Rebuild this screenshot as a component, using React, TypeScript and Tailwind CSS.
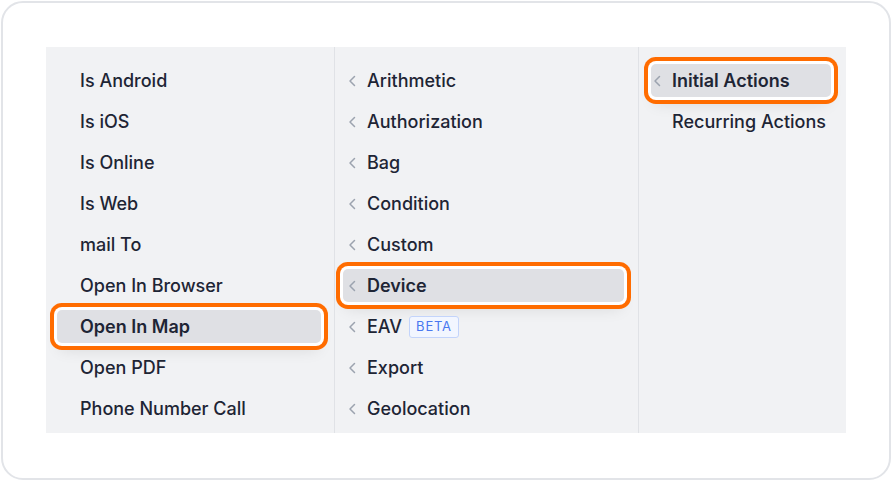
import React from "react";

type Item = {
  label: string;
  selected?: boolean;
  chevron?: boolean;
  badge?: string;
};

const left: Item[] = [
  { label: "Is Android" },
  { label: "Is iOS" },
  { label: "Is Online" },
  { label: "Is Web" },
  { label: "mail To" },
  { label: "Open In Browser" },
  { label: "Open In Map", selected: true },
  { label: "Open PDF" },
  { label: "Phone Number Call" },
];

const middle: Item[] = [
  { label: "Arithmetic", chevron: true },
  { label: "Authorization", chevron: true },
  { label: "Bag", chevron: true },
  { label: "Condition", chevron: true },
  { label: "Custom", chevron: true },
  { label: "Device", chevron: true, selected: true },
  { label: "EAV", chevron: true, badge: "BETA" },
  { label: "Export", chevron: true },
  { label: "Geolocation", chevron: true },
];

const right: Item[] = [
  { label: "Initial Actions", chevron: true, selected: true },
  { label: "Recurring Actions" },
];

function Chevron() {
  return (
    <svg width="10" height="12" viewBox="0 0 10 12" className="shrink-0">
      <polyline
        points="7.5,1.5 3,6 7.5,10.5"
        fill="none"
        stroke="#9ca3af"
        strokeWidth="1.5"
        strokeLinecap="round"
        strokeLinejoin="round"
      />
    </svg>
  );
}

function Row({ item, boxPad }: { item: Item; boxPad: string }) {
  return (
    <div className="h-[41px] flex items-center">
      <div
        className={`h-[33px] w-full flex items-center rounded-[5px] ${boxPad} ${
          item.selected
            ? "bg-[#dfe0e4] ring-4 ring-[#ff6c00] ring-offset-[3px] ring-offset-white shadow-lg shadow-black/10 font-semibold"
            : "font-medium"
        }`}
      >
        {item.chevron && <Chevron />}
        <span className={item.chevron ? "ml-[10px]" : ""}>{item.label}</span>
        {item.badge && (
          <span className="ml-[7px] h-[22px] px-[6px] flex items-center rounded-[3px] border border-[#c3d4fb] bg-[#f2f6ff] text-[13px] font-normal tracking-[0.06em] text-[#4a78f0]">
            {item.badge}
          </span>
        )}
      </div>
    </div>
  );
}

export default function App() {
  return (
    <div
      className="w-[892px] h-[481px] p-px bg-white"
      style={{ fontFamily: "Inter, 'Noto Sans', sans-serif" }}
    >
      <div className="h-full rounded-[22px] border-2 border-[#e2e4e8] bg-white pl-[43px] pt-[44px]">
        <div className="w-[800px] h-[386px] bg-[#f1f2f4] flex text-[18px] text-[#1e2535]">
          {/* LEFT */}
          <div className="w-[289px] border-r border-[#e0e2e6] pt-[13px] pl-[11px] pr-[13px]">
            {left.map((it) => (
              <Row key={it.label} item={it} boxPad="pl-[23px]" />
            ))}
          </div>

          {/* MIDDLE */}
          <div className="w-[304px] border-r border-[#e0e2e6] pt-[13px] pl-[8px] pr-[14px]">
            {middle.map((it) => (
              <Row key={it.label} item={it} boxPad="pl-[4px]" />
            ))}
          </div>

          {/* RIGHT */}
          <div className="flex-1 pt-[13px] pl-[12px] pr-[15px]">
            {right.map((it) => (
              <Row
                key={it.label}
                item={it}
                boxPad={it.chevron ? "pl-[1px]" : "pl-[21px]"}
              />
            ))}
          </div>
        </div>
      </div>
    </div>
  );
}
